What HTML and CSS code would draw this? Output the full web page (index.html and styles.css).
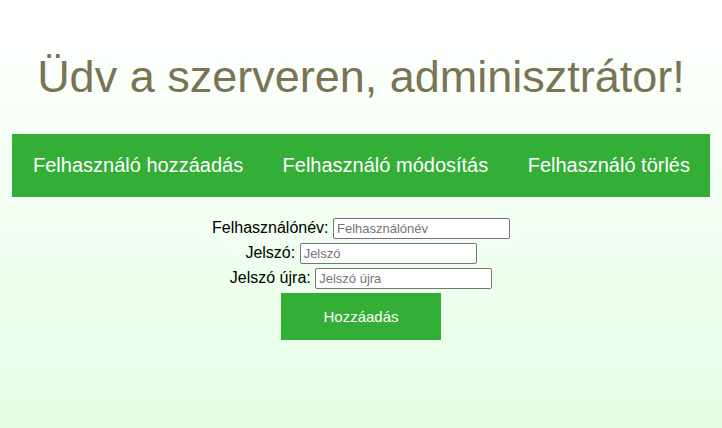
FILE: index.html
```html
<!DOCTYPE html>
<html lang="hu">
<head>
<meta charset="utf-8">
<title>Admin</title>
<link rel="stylesheet" href="styles.css">
</head>
<body>
<h1 class="title">Üdv a szerveren, adminisztrátor!</h1>
<nav class="nav">
  <a class="nav-item" href="#">Felhasználó hozzáadás</a>
  <a class="nav-item" href="#">Felhasználó módosítás</a>
  <a class="nav-item" href="#">Felhasználó törlés</a>
</nav>
<form class="form">
  <div class="row"><label>Felhasználónév:</label> <input type="text" placeholder="Felhasználónév"></div>
  <div class="row"><label>Jelszó:</label> <input type="password" placeholder="Jelszó"></div>
  <div class="row"><label>Jelszó újra:</label> <input type="password" placeholder="Jelszó újra"></div>
  <button type="button" class="btn">Hozzáadás</button>
</form>
</body>
</html>
```
FILE: styles.css
```css
html {
  min-height: 100%;
  background: linear-gradient(to bottom, #ffffff 0%, #e4ffe4 100%);
}
body {
  margin: 0;
  padding: 0 12px;
  font-family: "Liberation Sans", Arial, sans-serif;
}
.title {
  margin: 0;
  padding: 51px 0 31px;
  text-align: center;
  font-weight: normal;
  font-size: 45px;
  line-height: 52px;
  color: #7a7455;
}
.nav {
  display: flex;
  justify-content: space-between;
  align-items: center;
  height: 63px;
  padding: 0 20px 0 21px;
  background: #33ae36;
}
.nav-item {
  color: #ffffff;
  text-decoration: none;
  font-size: 20px;
}
.form {
  display: flex;
  flex-direction: column;
  align-items: center;
  padding-top: 21px;
}
.row {
  height: 25px;
  font-size: 16px;
  color: #000;
}
.row input {
  width: 177px;
  height: 21px;
  box-sizing: border-box;
  padding: 1px 3px;
  border: 1px solid #767676;
  border-radius: 2px;
  font-family: "Liberation Sans", Arial, sans-serif;
  font-size: 13px;
  background: #fff;
}
.btn {
  width: 160px;
  height: 47px;
  border: none;
  background: #33ae36;
  color: #fff;
  font-family: "Liberation Sans", Arial, sans-serif;
  font-size: 15px;
}
```
